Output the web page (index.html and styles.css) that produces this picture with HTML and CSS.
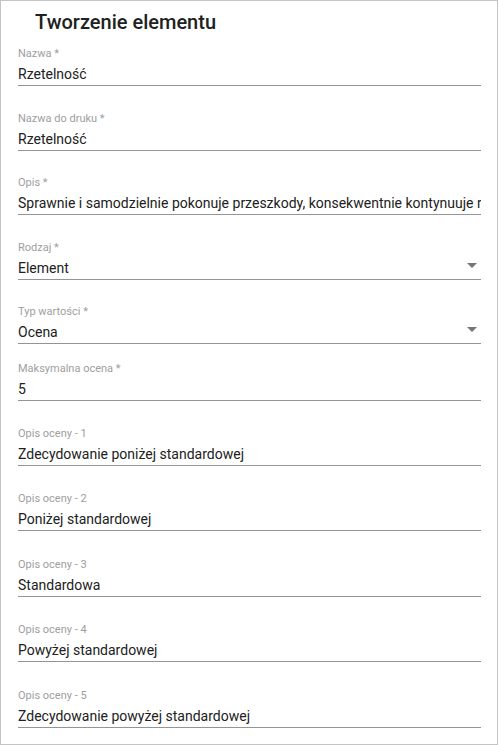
FILE: index.html
```html
<!DOCTYPE html>
<html lang="pl">
<head>
<meta charset="utf-8">
<title>Tworzenie elementu</title>
<link rel="stylesheet" href="styles.css">
</head>
<body>
<div class="dialog">
  <h1 class="title">Tworzenie elementu</h1>
  <form class="form">
    <div class="field">
      <label class="label">Nazwa *</label>
      <div class="control"><span class="value">Rzetelność</span></div>
    </div>
    <div class="field">
      <label class="label">Nazwa do druku *</label>
      <div class="control"><span class="value">Rzetelność</span></div>
    </div>
    <div class="field field--tight">
      <label class="label">Opis *</label>
      <div class="control"><span class="value">Sprawnie i samodzielnie pokonuje przeszkody, konsekwentnie kontynuuje realizację zadań</span></div>
    </div>
    <div class="field">
      <label class="label">Rodzaj *</label>
      <div class="control"><span class="value">Element</span><svg class="arrow" width="10" height="5" viewBox="0 0 10 5"><path d="M0 0h10L5 5z"/></svg></div>
    </div>
    <div class="field field--tight">
      <label class="label">Typ wartości *</label>
      <div class="control"><span class="value">Ocena</span><svg class="arrow" width="10" height="5" viewBox="0 0 10 5"><path d="M0 0h10L5 5z"/></svg></div>
    </div>
    <div class="field field--compact">
      <label class="label">Maksymalna ocena *</label>
      <div class="control"><span class="value">5</span></div>
    </div>
    <div class="field">
      <label class="label">Opis oceny - 1</label>
      <div class="control"><span class="value">Zdecydowanie poniżej standardowej</span></div>
    </div>
    <div class="field">
      <label class="label">Opis oceny - 2</label>
      <div class="control"><span class="value">Poniżej standardowej</span></div>
    </div>
    <div class="field field--loose">
      <label class="label">Opis oceny - 3</label>
      <div class="control"><span class="value">Standardowa</span></div>
    </div>
    <div class="field">
      <label class="label">Opis oceny - 4</label>
      <div class="control"><span class="value">Powyżej standardowej</span></div>
    </div>
    <div class="field field--loose">
      <label class="label">Opis oceny - 5</label>
      <div class="control"><span class="value">Zdecydowanie powyżej standardowej</span></div>
    </div>
  </form>
</div>
</body>
</html>
```
FILE: styles.css
```css
* { box-sizing: border-box; }
html, body { margin: 0; padding: 0; background: #fff; }
body { font-family: Roboto, "Noto Sans", Arial, sans-serif; color: #212121; }

.dialog {
  width: 498px;
  height: 745px;
  border: 1px solid #c4c4c4;
  padding: 9px 16px 0 17px;
  overflow: hidden;
}

.title {
  margin: 0 0 0 17px;
  font-size: 20px;
  font-weight: 500;
  line-height: 24px;
  color: #212121;
}

.form {
  display: flex;
  flex-direction: column;
  gap: 26px;
  margin-top: 13px;
}

.field--tight { margin-top: -1px; }
.field--loose { margin-top: 1px; }
.field--compact { margin-top: -8px; }

.label {
  display: block;
  font-size: 11px;
  line-height: 13px;
  color: #9e9e9e;
}

.control {
  display: flex;
  align-items: center;
  margin-top: 4px;
  padding-bottom: 1px;
  border-bottom: 1px solid #949494;
  height: 22px;
}

.value {
  flex: 1;
  min-width: 0;
  font-size: 14px;
  line-height: 20px;
  white-space: nowrap;
  overflow: hidden;
}

.arrow {
  flex: none;
  fill: #757575;
  margin: 0 4px 6px 8px;
}
```
